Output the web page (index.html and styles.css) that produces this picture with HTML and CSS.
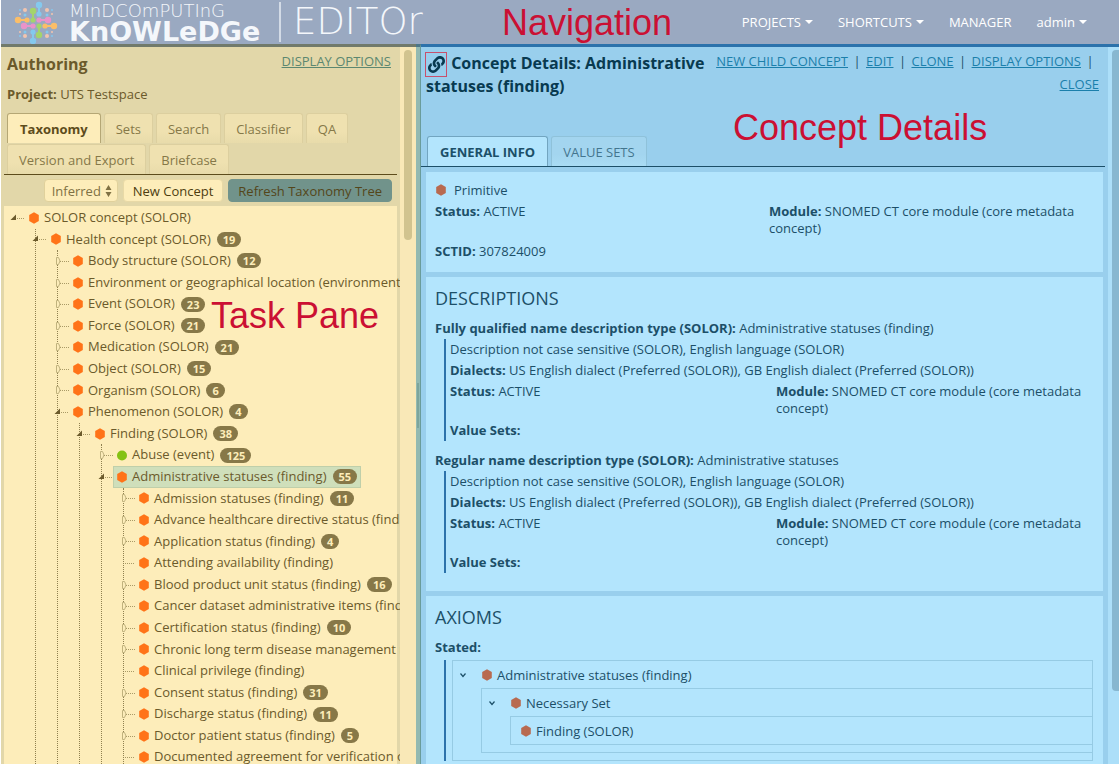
FILE: index.html
```html
<!DOCTYPE html>
<html lang="en">
<head>
<meta charset="utf-8">
<title>MindComputing Knowledge Editor</title>
<link rel="stylesheet" href="styles.css">
</head>
<body>
<svg class="defs" aria-hidden="true">
  <symbol id="hex" viewBox="0 0 10 12"><path d="M5 0.3 9.8 3.1V8.9L5 11.7 0.2 8.9V3.1Z"/></symbol>
  <symbol id="dot" viewBox="0 0 10 12"><circle cx="5" cy="6.5" r="5"/></symbol>
  <symbol id="open" viewBox="0 0 15 12"><path d="M6 2.500V8H0.500Z" fill="#6b5a2b"/><path d="M7 6.500H15" stroke="#a99a66" stroke-dasharray="1 1"/></symbol>
  <symbol id="closed" viewBox="0 0 15 12"><path d="M2.500 2.500H4.500L6 6 4.500 9.500H2.500Z" fill="#fdedba" stroke="#c0b27d"/><path d="M6 6.500H15" stroke="#a99a66" stroke-dasharray="1 1"/></symbol>
  <symbol id="leaf" viewBox="0 0 15 12"><path d="M5 6.500H15" stroke="#a99a66" stroke-dasharray="1 1"/></symbol>
  <symbol id="chev" viewBox="0 0 8 8"><path d="M1.500 2.500 4 5.500 6.500 2.500" fill="none" stroke="#1c4f68" stroke-width="1.200"/></symbol>
</svg>

<header class="topbar">
  <a class="brand" href="#" aria-label="MindComputing Knowledge Editor">
    <svg class="brand-mark" viewBox="14 1 44 43" aria-hidden="true">
      <g stroke-width="2" stroke-linecap="round">
        <path d="M39 5V14M33 32V41" stroke="#84c9ee"/>
        <path d="M33 11V20M39 26V35" stroke="#a4d46c"/>
        <path d="M18 20H27M45 26H54" stroke="#fbbe68"/>
        <path d="M39 20H48M24 26H33" stroke="#e993c9"/>
      </g>
      <g fill="#84c9ee"><circle cx="39" cy="5" r="3.200"/><circle cx="39" cy="14" r="2.600"/><circle cx="33" cy="32" r="2.600"/><circle cx="33" cy="41" r="3.200"/><circle cx="25" cy="15" r="1.500"/><circle cx="47" cy="15" r="1.500"/><circle cx="20" cy="10" r="1"/><circle cx="52" cy="10" r="1"/><circle cx="25" cy="32" r="1.500"/><circle cx="47" cy="32" r="1.500"/><circle cx="20" cy="36" r="1"/><circle cx="52" cy="36" r="1"/></g>
      <g fill="#a4d46c"><circle cx="33" cy="11" r="3.200"/><circle cx="33" cy="20" r="2.600"/><circle cx="39" cy="26" r="2.600"/><circle cx="39" cy="35" r="3.200"/></g>
      <g fill="#fbbe68"><circle cx="18" cy="20" r="3.200"/><circle cx="27" cy="20" r="2.600"/><circle cx="45" cy="26" r="2.600"/><circle cx="54" cy="26" r="3.200"/></g>
      <g fill="#e993c9"><circle cx="48" cy="20" r="3.200"/><circle cx="39" cy="20" r="2.600"/><circle cx="33" cy="26" r="2.600"/><circle cx="24" cy="26" r="3.200"/></g>
      <g fill="#f2c4ae"><circle cx="25" cy="10" r="2"/><circle cx="47" cy="10" r="2"/><circle cx="20" cy="14" r="1"/><circle cx="52" cy="14" r="1"/><circle cx="25" cy="36" r="2"/><circle cx="47" cy="36" r="2"/><circle cx="20" cy="32" r="1"/><circle cx="52" cy="32" r="1"/></g>
    </svg>
    <span class="brand-name"><span class="brand-top">MInDCOmPUTInG</span><span class="brand-main">KnOWLeDGe</span></span>
    <span class="brand-app">EDITOr</span>
  </a>
  <nav class="menu">
    <a href="#">PROJECTS <i class="caret"></i></a>
    <a href="#">SHORTCUTS <i class="caret"></i></a>
    <a href="#">MANAGER</a>
    <a href="#">admin <i class="caret"></i></a>
  </nav>
  <span class="note note-nav">Navigation</span>
</header>

<main class="split">
  <section class="task">
    <div class="task-body">
      <div class="task-head">
        <h1>Authoring</h1>
        <a class="link" href="#">DISPLAY OPTIONS</a>
      </div>
      <p class="project"><b>Project:</b> UTS Testspace</p>
      <div class="tabs" role="tablist">
        <button class="tab active" role="tab">Taxonomy</button>
        <button class="tab" role="tab">Sets</button>
        <button class="tab" role="tab">Search</button>
        <button class="tab" role="tab">Classifier</button>
        <button class="tab" role="tab">QA</button>
        <button class="tab" role="tab">Version and Export</button>
        <button class="tab" role="tab">Briefcase</button>
      </div>
      <div class="tools">
        <span class="select-box">
          <select aria-label="Taxonomy view"><option>Inferred</option><option>Stated</option></select>
          <svg class="updown" viewBox="0 0 7 12" aria-hidden="true"><path d="M3.500 0 6.500 5H0.500ZM3.500 12 0.500 7H6.500Z" fill="#7f7144"/></svg>
        </span>
        <button class="btn">New Concept</button>
        <button class="btn primary">Refresh Taxonomy Tree</button>
      </div>
      <div class="tree-box">
        <ul class="tree">
          <li><div class="row"><svg class="tog"><use href="#open"/></svg><a href="#"><svg class="ico"><use href="#hex"/></svg>SOLOR concept (SOLOR)</a></div>
          <ul>
            <li><div class="row"><svg class="tog"><use href="#open"/></svg><a href="#"><svg class="ico"><use href="#hex"/></svg>Health concept (SOLOR)<span class="badge">19</span></a></div>
            <ul>
              <li><div class="row"><svg class="tog"><use href="#closed"/></svg><a href="#"><svg class="ico"><use href="#hex"/></svg>Body structure (SOLOR)<span class="badge">12</span></a></div></li>
              <li><div class="row"><svg class="tog"><use href="#closed"/></svg><a href="#"><svg class="ico"><use href="#hex"/></svg>Environment or geographical location (environment /</a></div></li>
              <li><div class="row"><svg class="tog"><use href="#closed"/></svg><a href="#"><svg class="ico"><use href="#hex"/></svg>Event (SOLOR)<span class="badge">23</span></a></div></li>
              <li><div class="row"><svg class="tog"><use href="#closed"/></svg><a href="#"><svg class="ico"><use href="#hex"/></svg>Force (SOLOR)<span class="badge">21</span></a></div></li>
              <li><div class="row"><svg class="tog"><use href="#closed"/></svg><a href="#"><svg class="ico"><use href="#hex"/></svg>Medication (SOLOR)<span class="badge">21</span></a></div></li>
              <li><div class="row"><svg class="tog"><use href="#closed"/></svg><a href="#"><svg class="ico"><use href="#hex"/></svg>Object (SOLOR)<span class="badge">15</span></a></div></li>
              <li><div class="row"><svg class="tog"><use href="#closed"/></svg><a href="#"><svg class="ico"><use href="#hex"/></svg>Organism (SOLOR)<span class="badge">6</span></a></div></li>
              <li><div class="row"><svg class="tog"><use href="#open"/></svg><a href="#"><svg class="ico"><use href="#hex"/></svg>Phenomenon (SOLOR)<span class="badge">4</span></a></div>
              <ul>
                <li><div class="row"><svg class="tog"><use href="#open"/></svg><a href="#"><svg class="ico"><use href="#hex"/></svg>Finding (SOLOR)<span class="badge">38</span></a></div>
                <ul>
                  <li><div class="row"><svg class="tog"><use href="#closed"/></svg><a href="#"><svg class="ico green"><use href="#dot"/></svg>Abuse (event)<span class="badge">125</span></a></div></li>
                  <li><div class="row"><svg class="tog"><use href="#open"/></svg><a class="selected" href="#"><svg class="ico"><use href="#hex"/></svg>Administrative statuses (finding)<span class="badge">55</span></a></div>
                  <ul>
                    <li><div class="row"><svg class="tog"><use href="#closed"/></svg><a href="#"><svg class="ico"><use href="#hex"/></svg>Admission statuses (finding)<span class="badge">11</span></a></div></li>
                    <li><div class="row"><svg class="tog"><use href="#closed"/></svg><a href="#"><svg class="ico"><use href="#hex"/></svg>Advance healthcare directive status (finding)</a></div></li>
                    <li><div class="row"><svg class="tog"><use href="#closed"/></svg><a href="#"><svg class="ico"><use href="#hex"/></svg>Application status (finding)<span class="badge">4</span></a></div></li>
                    <li><div class="row"><svg class="tog"><use href="#leaf"/></svg><a href="#"><svg class="ico"><use href="#hex"/></svg>Attending availability (finding)</a></div></li>
                    <li><div class="row"><svg class="tog"><use href="#closed"/></svg><a href="#"><svg class="ico"><use href="#hex"/></svg>Blood product unit status (finding)<span class="badge">16</span></a></div></li>
                    <li><div class="row"><svg class="tog"><use href="#closed"/></svg><a href="#"><svg class="ico"><use href="#hex"/></svg>Cancer dataset administrative items (finding)</a></div></li>
                    <li><div class="row"><svg class="tog"><use href="#closed"/></svg><a href="#"><svg class="ico"><use href="#hex"/></svg>Certification status (finding)<span class="badge">10</span></a></div></li>
                    <li><div class="row"><svg class="tog"><use href="#closed"/></svg><a href="#"><svg class="ico"><use href="#hex"/></svg>Chronic long term disease management regime</a></div></li>
                    <li><div class="row"><svg class="tog"><use href="#leaf"/></svg><a href="#"><svg class="ico"><use href="#hex"/></svg>Clinical privilege (finding)</a></div></li>
                    <li><div class="row"><svg class="tog"><use href="#closed"/></svg><a href="#"><svg class="ico"><use href="#hex"/></svg>Consent status (finding)<span class="badge">31</span></a></div></li>
                    <li><div class="row"><svg class="tog"><use href="#closed"/></svg><a href="#"><svg class="ico"><use href="#hex"/></svg>Discharge status (finding)<span class="badge">11</span></a></div></li>
                    <li><div class="row"><svg class="tog"><use href="#closed"/></svg><a href="#"><svg class="ico"><use href="#hex"/></svg>Doctor patient status (finding)<span class="badge">5</span></a></div></li>
                    <li><div class="row"><svg class="tog"><use href="#leaf"/></svg><a href="#"><svg class="ico"><use href="#hex"/></svg>Documented agreement for verification of</a></div></li>
                  </ul></li>
                </ul></li>
              </ul></li>
            </ul></li>
          </ul></li>
        </ul>
      </div>
    </div>
    <div class="scroll"><div class="thumb"></div></div>
    <span class="note note-task">Task Pane</span>
  </section>

  <div class="splitter"><div class="grip"></div></div>

  <section class="details">
    <div class="details-body">
      <div class="details-head">
        <h1><a class="permalink" href="#" aria-label="Permalink"><svg viewBox="0 0 512 512" aria-hidden="true"><path fill="#083a50" d="M326.600 185.400c59.700 59.800 58.900 155.700.4 214.600-.1.100-.2.300-.4.400l-67.200 67.200c-59.300 59.300-155.700 59.300-215 0-59.300-59.300-59.300-155.700 0-215l37.100-37.100c9.800-9.800 26.800-3.300 27.300 10.600.6 17.700 3.800 35.500 9.700 52.700 2 5.800.6 12.300-3.800 16.600l-13.100 13.100c-28 28-28.900 73.700-1.200 102 28 28.600 74.100 28.700 102.300.5l67.200-67.200c28.200-28.200 28.100-73.800 0-101.800-3.700-3.700-7.400-6.600-10.300-8.600a16 16 0 0 1-6.900-12.600c-.4-10.600 3.300-21.500 11.700-29.800l21.100-21.100c5.500-5.500 14.200-6.200 20.600-1.700a152.500 152.500 0 0 1 20.500 17.200zM467.500 44.400c-59.300-59.300-155.700-59.300-215 0l-67.200 67.200c-.1.100-.3.300-.4.400-58.600 58.900-59.400 154.800.4 214.600a152.500 152.500 0 0 0 20.500 17.200c6.400 4.500 15.100 3.800 20.600-1.700l21.100-21.100c8.400-8.400 12.100-19.200 11.700-29.800a16 16 0 0 0-6.900-12.600c-2.900-2-6.600-4.900-10.300-8.600-28.100-28.100-28.200-73.600 0-101.800l67.200-67.200c28.200-28.200 74.300-28.100 102.300.5 27.800 28.300 26.900 73.900-1.200 102l-13.100 13.100c-4.400 4.400-5.800 10.800-3.800 16.600 5.900 17.200 9 35 9.700 52.700.5 13.900 17.500 20.400 27.300 10.600l37.100-37.100c59.300-59.300 59.300-155.700 0-215z"/></svg></a> Concept Details: Administrative statuses (finding)</h1>
        <div class="actions"><a class="link" href="#">NEW CHILD CONCEPT</a><i>|</i><a class="link" href="#">EDIT</a><i>|</i><a class="link" href="#">CLONE</a><i>|</i><a class="link" href="#">DISPLAY OPTIONS</a><i>|</i><a class="link close" href="#">CLOSE</a></div>
      </div>
      <div class="tabs" role="tablist">
        <button class="tab active" role="tab">GENERAL INFO</button>
        <button class="tab" role="tab">VALUE SETS</button>
      </div>
      <div class="cards">
        <section class="card">
          <p class="kind"><svg class="ico"><use href="#hex"/></svg>Primitive</p>
          <div class="pair"><p><b>Status:</b> ACTIVE</p><p><b>Module:</b> SNOMED CT core module (core metadata concept)</p></div>
          <p><b>SCTID:</b> 307824009</p>
        </section>
        <section class="card">
          <h2>DESCRIPTIONS</h2>
          <p><b>Fully qualified name description type (SOLOR):</b> Administrative statuses (finding)</p>
          <div class="detail">
            <p>Description not case sensitive (SOLOR), English language (SOLOR)</p>
            <p><b>Dialects:</b> US English dialect (Preferred (SOLOR)), GB English dialect (Preferred (SOLOR))</p>
            <div class="pair"><p><b>Status:</b> ACTIVE</p><p><b>Module:</b> SNOMED CT core module (core metadata concept)</p></div>
            <p><b>Value Sets:</b></p>
          </div>
          <p><b>Regular name description type (SOLOR):</b> Administrative statuses</p>
          <div class="detail">
            <p>Description not case sensitive (SOLOR), English language (SOLOR)</p>
            <p><b>Dialects:</b> US English dialect (Preferred (SOLOR)), GB English dialect (Preferred (SOLOR))</p>
            <div class="pair"><p><b>Status:</b> ACTIVE</p><p><b>Module:</b> SNOMED CT core module (core metadata concept)</p></div>
            <p><b>Value Sets:</b></p>
          </div>
        </section>
        <section class="card">
          <h2>AXIOMS</h2>
          <p><b>Stated:</b></p>
          <div class="axioms">
            <div class="axiom root">
              <p><svg class="chev"><use href="#chev"/></svg><svg class="ico"><use href="#hex"/></svg>Administrative statuses (finding)</p>
              <div class="axiom">
                <p><svg class="chev"><use href="#chev"/></svg><svg class="ico"><use href="#hex"/></svg>Necessary Set</p>
                <div class="axiom leaf">
                  <p><svg class="ico"><use href="#hex"/></svg>Finding (SOLOR)</p>
                </div>
              </div>
            </div>
          </div>
        </section>
      </div>
    </div>
    <div class="scroll"><div class="thumb"></div></div>
    <span class="note note-details">Concept Details</span>
  </section>
</main>
</body>
</html>
```
FILE: styles.css
```css
* { box-sizing: border-box; }
html, body { height: 100%; }
body {
  margin: 0;
  display: flex;
  flex-direction: column;
  overflow: hidden;
  background: #fff;
  font: 13px/22px "Open Sans", "Noto Sans", sans-serif;
}
h1, h2, p, ul { margin: 0; padding: 0; }
ul { list-style: none; }
button, select { font: inherit; color: inherit; }
i { font-style: normal; }
.defs { display: none; }

/* top bar */
.topbar {
  position: relative;
  flex: none;
  height: 44px;
  display: flex;
  align-items: center;
  justify-content: space-between;
  margin-left: 1px;
  padding: 0 32px 0 13px;
  background: #9aa9c1;
  color: #fff;
}
.brand { display: flex; align-items: center; color: #f4f7fb; text-decoration: none; font-family: "DejaVu Sans", sans-serif; }
.brand-mark { width: 44px; height: 43px; }
.brand-name { display: flex; flex-direction: column; width: 210px; margin-left: 11px; }
.brand-top { font-size: 18px; line-height: 20px; font-weight: 200; }
.brand-main { font-size: 27px; line-height: 22px; font-weight: 700; }
.brand-app { padding-left: 12px; border-left: 2px solid #d3dbe6; font-size: 37px; line-height: 40px; font-weight: 200; }
.menu { display: flex; gap: 25px; }
.menu a { display: flex; align-items: center; gap: 4px; color: #fff; text-decoration: none; }
.caret { width: 7px; border: solid transparent; border-width: 4px 4px 0; border-top-color: #fff; }

.note { position: absolute; z-index: 2; font: 36px/40px "Liberation Sans", Arial, sans-serif; color: #cb1033; pointer-events: none; white-space: nowrap; }
.note-nav { left: 501px; top: 3px; }
.note-task { left: 210px; top: 249px; }
.note-details { left: 312px; top: 61px; }

/* split layout */
.split { flex: 1; min-height: 0; display: flex; }
.task { position: relative; flex: 0 0 415px; margin-left: 1px; display: flex; min-width: 0; background: #e2d7a9; border-top: 3px solid #717a6b; color: #6b5a2b; }
.task-body { flex: 1; min-width: 0; display: flex; flex-direction: column; }
.scroll { flex: none; padding-top: 3px; }
.task .scroll { width: 16px; padding-left: 4px; background: #f9e8b7; }
.task .thumb { width: 8px; height: 190px; border-radius: 4px; background: #d1c38f; }
.splitter { flex: 0 0 5px; display: flex; flex-direction: column; justify-content: center; background: #93b9b1; border-top: 3px solid #4b7688; border-right: 1px solid #6a9c9b; }
.grip { height: 45px; margin: 0 1px; border: solid #7da59c; border-width: 0 1px; }
.details { position: relative; flex: 1; min-width: 0; display: flex; background: #99cfed; border-top: 3px solid #2c72ab; color: #1c4f68; }
.details-body { flex: 1; min-width: 0; display: flex; flex-direction: column; }
.details .scroll { width: 11px; padding-left: 4px; background: #acdff9; }
.details .thumb { height: 641px; border-radius: 4px 0 0 4px; background: #87b7d0; }

h1 { font-size: 16px; line-height: 23px; font-weight: 700; }
.link { color: #5c8770; }
.details .link { color: #1b7fab; }

/* task pane */
.task-head { display: flex; justify-content: space-between; padding: 6px 9px 0 6px; line-height: 17px; }
.project { padding: 7px 6px 0; }
.tabs { display: flex; flex-wrap: wrap; gap: 1px 3px; }
.tab {
  height: 30px;
  padding: 0 11px;
  border: 1px solid #dccf9f;
  border-bottom: 0;
  border-radius: 3px 3px 0 0;
  background: linear-gradient(#efe1b0 60%, #e8dbaa);
  color: #857848;
}
.tab.active { padding: 0 12px; background: #fdedba; border-color: #b5a775; color: #5d4c1c; font-weight: 700; }
.task .tabs { margin: 8px 3px 0; padding: 0 3px; border-bottom: 1px solid #5d4c1c; }
.tools { display: flex; gap: 5px; justify-content: flex-end; padding: 4px 8px 4px 0; }
.select-box { display: flex; align-items: center; width: 74px; height: 23px; padding: 0 5px 0 7px; background: #fdedba; border: 1px solid #e0d19c; border-radius: 4px; color: #7f7144; }
.select-box select { flex: 1; min-width: 0; padding: 0; border: 0; background: none; appearance: none; }
.updown { flex: none; width: 7px; height: 12px; }
.btn { height: 23px; padding: 0 9px; border: 1px solid #e8d9a6; border-radius: 4px; background: #fdedba; color: #4d3d10; line-height: 20px; }
.btn.primary { background: #71938b; border-color: #71938b; color: #54461a; }

/* taxonomy tree */
.tree-box { flex: 1; min-height: 0; margin-left: 3px; overflow: hidden; background: linear-gradient(#e2d7a9, #e2d7a9) right / 3px 100% no-repeat #fdedba; }
.tree { margin-left: 10px; padding-top: 1px; line-height: 1.66; }
.tree ul { margin-left: 21px; border-left: 1px dotted #8f8050; }
.tree .row { display: flex; align-items: center; margin-left: -4px; white-space: nowrap; }
.tog { flex: none; width: 15px; height: 12px; }
.tree a { display: flex; align-items: center; padding: 0 4px; color: inherit; text-decoration: none; }
.tree a.selected { background: #cfdfbb; box-shadow: inset 0 0 0 1px #bfcfaa; }
.ico { flex: none; width: 10px; height: 12px; margin-right: 5px; fill: #ff7318; }
.ico.green { fill: #84c213; }
.badge { margin-left: 6px; padding: 0 6px; border-radius: 8px; background: #877848; color: #fdedba; font-size: 11px; line-height: 15px; font-weight: 700; }

/* concept details */
.details-head { display: flex; justify-content: space-between; min-height: 90px; padding: 5px 9px 0 5px; }
.details h1 { flex: 1; color: #083a50; }
.permalink { display: inline-block; vertical-align: top; width: 22px; height: 25px; padding: 3px 2px; margin: 0 0 -2px -1px; border: 1px solid #c8506c; line-height: 0; }
.permalink svg { width: 17px; height: 17px; }
.actions { flex: 0 0 386px; display: flex; flex-wrap: wrap; justify-content: flex-end; align-content: flex-start; line-height: 23px; margin-top: -2px; }
.actions i { width: 18px; text-align: center; }
.details .tabs { padding-left: 6px; border-bottom: 1px solid #1c4f68; margin: -1px 3px 0 0; }
.details .tab { border-color: #8fc2da; background: linear-gradient(#a3d5ef 60%, #a9dcf4); color: #43758e; }
.details .tab.active { background: #b3e5fd; border-color: #72a5c0; color: #1c4f68; }
.cards { display: flex; flex-direction: column; gap: 5px; padding: 5px 5px 0; }
.card { padding: 7px 10px 10px 9px; background: #b3e5fd; }
.kind, .axiom p { display: flex; align-items: center; }
.kind .ico { margin: 0 8px 0 1px; }
.details .ico { fill: #b86a50; }
.pair { display: grid; grid-template-columns: 334px 1fr; line-height: 17px; padding: 2px 0 3px; }
h2 { font-size: 18px; line-height: 28px; font-weight: 400; margin-bottom: 5px; }
.detail { margin: 0 0 8px 9px; padding-left: 4px; border-left: 2px solid #2c72ab; line-height: 21px; }
.detail .pair { grid-template-columns: 326px 1fr; }
.axioms { margin: 2px 0 0 9px; padding-left: 6px; border-left: 2px solid #2c72ab; }
.axiom { padding: 0 0 7px 28px; border: 1px solid #96cbe4; border-right: 0; }
.axiom.root { border-right: 1px solid #96cbe4; }
.axiom p { height: 27px; margin-left: -28px; padding-left: 6px; }
.axiom.leaf { padding-bottom: 0; }
.axiom.leaf p { padding-left: 10px; }
.chev { width: 8px; height: 8px; margin-right: 15px; }
```
